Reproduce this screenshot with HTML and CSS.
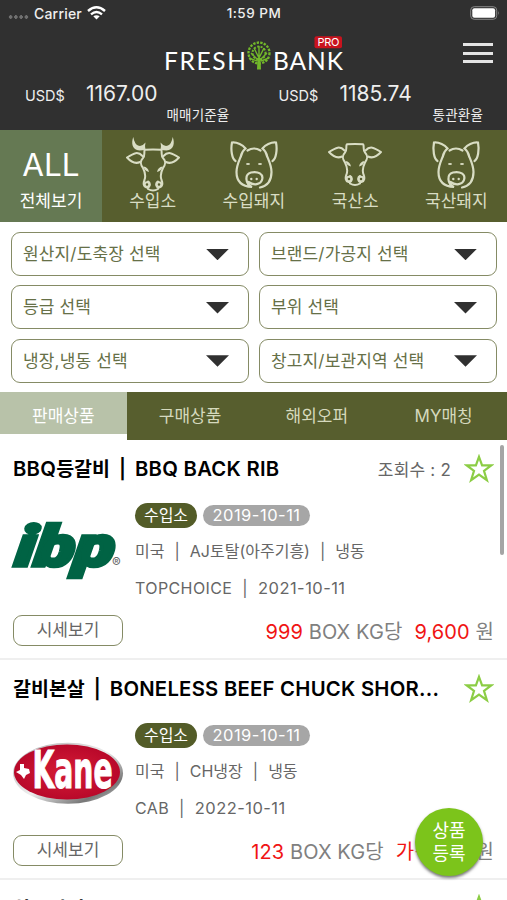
FILE: index.html
```html
<!DOCTYPE html>
<html lang="ko">
<head>
<meta charset="utf-8">
<title>FRESH BANK PRO</title>
<link rel="stylesheet" href="styles.css">
</head>
<body>
<svg class="defs" width="0" height="0" aria-hidden="true">
  <symbol id="head-cow" viewBox="0 0 54 56">
    <g fill="none" stroke="currentColor" stroke-width="2" stroke-linecap="round" stroke-linejoin="round">
      <path d="M19 13.8Q27 13 35 13.8M18.5 14.5C18 18 19 20 17 22C14 25 14.500 29 17 32C19 36 20 40 18.500 44C17 47 17.500 51 20.500 51.500C24 52 25 47 22 45.500M35.500 14.500C36 18 35 20 37 22C40 25 39.500 29 37 32C35 36 34 40 35.500 44C37 47 36.500 51 33.500 51.500C30 52 29 47 32 45.500M22 53Q27 56 32 53"/>
      <path d="M16.500 20C12 15 8 17 1 21.500C6 27 10 28 14 26M37.500 20C42 15 46 17 53 21.500C48 27 44 28 40 26"/>
      <circle cx="21" cy="48.500" r="2.300"/><circle cx="33" cy="48.500" r="2.300"/>
    </g>
    <path fill="currentColor" d="M17.500 30.500Q22 31 23 36Q18.500 35 17.500 30.500M36.500 30.500Q32 31 31 36Q35.500 35 36.500 30.500"/>
  </symbol>
  <symbol id="horned" viewBox="0 0 54 56">
    <path fill="currentColor" d="M7.300 1C5 7 6 14 13.500 14.500L19.500 14Q18.500 10 19.500 6.500Q16 11 12 9.500Q8.500 8 7.300 1M46.700 1C49 7 48 14 40.500 14.500L34.500 14Q35.500 10 34.500 6.500Q38 11 42 9.500Q45.500 8 46.700 1"/>
    <use href="#head-cow" width="54" height="56"/>
  </symbol>
  <symbol id="polled" viewBox="0 5.500 54 56"><use href="#head-cow" width="54" height="56"/></symbol>
  <symbol id="pig" viewBox="0 0 54 56">
    <g fill="none" stroke="currentColor" stroke-width="2.200" stroke-linecap="round">
      <path d="M8.500 25C5 23 3.500 14 5 6.500C10 6 16 9 18.500 12.500C16 14.500 14.500 17 14 20M45.500 25C49 23 50.500 14 49 6.500C44 6 38 9 35.500 12.500C38 14.500 39.500 17 40 20M20.500 14.500Q27 10.500 33.500 14.500"/>
      <path d="M14 20C12 25 9.500 30 9.500 36C9.500 46 15 50.500 25 51C18 48 17.500 38 24 36.500C31 35 37 38 35 44C33.500 48.500 27 50 21.500 46M40 20C42 25 44.500 30 44.500 36C44.500 46 40 50 33 51.500"/>
    </g>
    <g fill="currentColor"><ellipse cx="21" cy="28" rx="2" ry="1"/><ellipse cx="33" cy="28" rx="2" ry="1"/><circle cx="24.300" cy="43" r="1.200"/><circle cx="29.700" cy="43" r="1.200"/></g>
  </symbol>
  <symbol id="star" viewBox="0 0 30 30"><path d="M15 2.800L18.100 11.400H27.200L20 16.900L22.900 26.200L15 20.700L7.100 26.200L10 16.900L2.800 11.400H11.900Z" fill="none" stroke="#8ccd45" stroke-width="2.200"/></symbol>
</svg>

<main class="app">
  <header class="header">
    <div class="status">
      <div class="carrier"><i class="dots"></i><span>Carrier</span>
        <svg width="19" height="14" viewBox="0 0 19 14"><g fill="none" stroke="#fff" stroke-width="2.400"><path d="M1 5Q9.500-2.500 18 5"/><path d="M4 8.300Q9.500 3.700 15 8.300"/></g><path d="M6.300 10.300Q9.500 8 12.700 10.300L9.500 13.500Z" fill="#fff"/></svg>
      </div>
      <time>1:59 PM</time>
      <svg class="battery" width="30" height="14" viewBox="0 0 30 14"><rect x=".7" y=".7" width="26" height="12.600" rx="3.500" fill="none" stroke="#888" stroke-width="1"/><rect x="2.300" y="2.200" width="22.800" height="9.600" rx="2" fill="#fff"/><path d="M28 5v4q1.500-2 0-4" fill="#888"/></svg>
    </div>
    <div class="brand">
      <svg width="182" height="42" viewBox="0 0 182 42">
        <g class="logo-text"><text x="2" y="35.500" textLength="82">FRESH</text><text x="111" y="35.500" textLength="70">BANK</text></g>
        <g fill="none" stroke="#72b82a" stroke-width="1.400"><path d="M97 34V22M97 27L89 19M97 27L105 19M97 24L92 14M97 24L102 14M97 24V12M95 27L87 24M99 27L107 24" /><circle cx="97" cy="19" r="10.500" stroke-width="2.300" stroke-dasharray="2.400 1.200"/><circle cx="97" cy="19" r="6.500" stroke-width="2" stroke-dasharray="2 1.500"/></g><path d="M95.500 24H98.500L99 35.500H95Z" fill="#72b82a"/>
        <rect x="152.500" y="2.300" width="27.500" height="12" rx="2" fill="#c9131e"/><text class="pro" x="155.500" y="12.300" textLength="22">PRO</text>
      </svg>
      <div class="menu"><i></i><i></i><i></i></div>
    </div>
    <div class="rates">
      <div class="rate"><span>USD$</span><strong>1167.00</strong><small>매매기준율</small></div>
      <div class="rate"><span>USD$</span><strong>1185.74</strong><small>통관환율</small></div>
    </div>
  </header>

  <nav class="categories">
    <a class="category active"><b>ALL</b><span>전체보기</span></a>
    <a class="category"><svg><use href="#horned"/></svg><span>수입소</span></a>
    <a class="category"><svg><use href="#pig"/></svg><span>수입돼지</span></a>
    <a class="category"><svg><use href="#polled"/></svg><span>국산소</span></a>
    <a class="category"><svg><use href="#pig"/></svg><span>국산돼지</span></a>
  </nav>

  <section class="filters">
    <div class="select">원산지/도축장 선택</div><div class="select">브랜드/가공지 선택</div>
    <div class="select">등급 선택</div><div class="select">부위 선택</div>
    <div class="select">냉장,냉동 선택</div><div class="select">창고지/보관지역 선택</div>
  </section>

  <nav class="tabs"><a class="active">판매상품</a><a>구매상품</a><a>해외오퍼</a><a>MY매칭</a></nav>

  <section class="list">
    <article class="item">
      <div class="heading"><h2><span class="latin">BBQ</span>등갈비<i>|</i><span class="latin">BBQ BACK RIB</span></h2><span class="views">조회수 : 2</span><svg class="star"><use href="#star"/></svg></div>
      <div class="body">
        <svg class="maker" viewBox="0 0 111 64"><g transform="translate(1 43.500) skewX(-7) scale(1 1.180)"><text class="ibp" x="0" y="0" textLength="99" lengthAdjust="spacingAndGlyphs">ibp</text></g><text class="reg" x="99" y="45">®</text></svg>
        <div class="details">
          <div class="badges"><span class="type">수입소</span><span class="date">2019-10-11</span></div>
          <p>미국<i>|</i>AJ토탈(아주기흥)<i>|</i>냉동</p>
          <p class="grade">TOPCHOICE<i>|</i><span>2021-10-11</span></p>
        </div>
      </div>
      <div class="foot"><button>시세보기</button><p class="price"><em>999</em> BOX KG당<em class="amount">9,600</em> 원</p></div>
    </article>
    <article class="item">
      <div class="heading"><h2>갈비본살<i>|</i><span class="latin">BONELESS BEEF CHUCK SHOR...</span></h2><svg class="star"><use href="#star"/></svg></div>
      <div class="body">
        <svg class="maker" viewBox="0 0 111 64">
          <defs><linearGradient id="rim" x2="1" y2="1"><stop stop-color="#aaa"/><stop offset=".5" stop-color="#eee"/><stop offset=".8" stop-color="#777"/><stop offset="1" stop-color="#ddd"/></linearGradient><radialGradient id="red"><stop stop-color="#d51d36"/><stop offset="1" stop-color="#b9082a"/></radialGradient></defs>
          <ellipse cx="55" cy="31.300" rx="55" ry="30.500" fill="url(#rim)"/><ellipse cx="54" cy="30" rx="53" ry="27.500" fill="url(#red)"/>
          <path d="M8 23h4v4l5 1 1 4-4 2-2 4-3-4-5-3 4-2z" transform="translate(-1 -1)" fill="#fff"/>
          <g transform="translate(19.500 46.300) scale(1 1.080)"><text class="kane" x="0" y="0" textLength="80" lengthAdjust="spacingAndGlyphs">Kane</text></g>
        </svg>
        <div class="details">
          <div class="badges"><span class="type">수입소</span><span class="date">2019-10-11</span></div>
          <p>미국<i>|</i>CH냉장<i>|</i>냉동</p>
          <p class="grade">CAB<i>|</i><span>2022-10-11</span></p>
        </div>
      </div>
      <div class="foot"><button>시세보기</button><p class="price"><em>123</em> BOX KG당<em class="amount">가격문의</em> 원</p></div>
    </article>
    <article class="item">
      <div class="heading"><h2>차돌박이</h2><svg class="star"><use href="#star"/></svg></div>
    </article>
    <i class="scrollbar"></i>
  </section>
  <button class="fab">상품<br>등록</button>
</main>
</body>
</html>
```
FILE: styles.css
```css
* { box-sizing: border-box; }
body { margin: 0; font-family: Inter, "Noto Sans CJK KR", sans-serif; background: #fff; color: #666; }
i, em { font-style: normal; }
p, h2 { margin: 0; }
button { font-family: inherit; }
.defs { display: block; height: 0; }
.app { position: relative; width: 507px; height: 900px; overflow: hidden; display: flex; flex-direction: column; }

.header { height: 130px; flex: none; background: #303030; color: #eee; }
.status { height: 26px; display: grid; grid-template-columns: 1fr auto 1fr; align-items: center; padding: 0 7px 0 8px; font-size: 14px; font-weight: 500; letter-spacing: .2px; }
.carrier { display: flex; align-items: center; gap: 5px; }
.dots { width: 21px; height: 4px; margin-top: 8px; background: radial-gradient(circle, #707070 1.600px, transparent 2px) 0 0 / 5.250px 4px; }
.status time { font-size: 13.500px; letter-spacing: .5px; }
.battery { justify-self: end; }
.brand { height: 52px; display: flex; justify-content: space-between; padding: 8px 14px 0 162px; }
.logo-text { font: 400 24.500px Lato, sans-serif; fill: #fff; }
.pro { font: 400 11px Inter, sans-serif; fill: #fff; }
.menu { width: 30px; height: 20px; margin-top: 9px; display: flex; flex-direction: column; justify-content: space-between; }
.menu i { height: 3px; background: #e4e4e4; }
.rates { display: grid; grid-template-columns: 1fr 1fr; }
.rate { display: grid; grid-template-columns: 61px 1fr; align-items: baseline; padding: 3px 24px 0 25px; }
.rate span { font-size: 14.500px; }
.rate strong { font-size: 21px; line-height: 26px; font-weight: 400; letter-spacing: 0; }
.rate small { grid-column: 1 / 3; text-align: right; font-size: 13.500px; line-height: 16px; letter-spacing: .2px; }

.categories { height: 92px; flex: none; display: grid; grid-template-columns: 102px repeat(4, 1fr); background: #575e2e; color: #d9ddc4; }
.category { display: flex; flex-direction: column; align-items: center; padding-top: 6px; }
.category svg { width: 54px; height: 56px; flex: none; }
.category span { font-size: 17px; line-height: 20px; letter-spacing: 0; margin-top: -1px; }
.category b { height: 56px; padding-top: 7px; font-size: 31.500px; line-height: 44px; font-weight: 400; }
.category.active { background: #657953; color: #fff; }

.filters { height: 170px; flex: none; display: grid; grid-template-columns: 1fr 1fr; grid-auto-rows: 44px; gap: 9.300px 10px; padding: 10px 10px 0 11px; }
.select { border: 1.500px solid #858b65; border-radius: 9px; padding: 0 19px 3px 11px; display: flex; align-items: center; justify-content: space-between; font-size: 17px; letter-spacing: .15px; color: #667047; }
.select::after { content: ""; width: 23px; height: 11.500px; margin-top: 4px; background: #303030; clip-path: polygon(0 0, 100% 0, 50% 100%); }

.tabs { height: 48px; flex: none; display: grid; grid-template-columns: repeat(4, 1fr); background: linear-gradient(90deg, #fff 127px, #575e2e 127px); color: #d5d9bd; }
.tabs a { height: 48px; line-height: 49px; text-align: center; font-size: 17px; letter-spacing: 0; }
.tabs .active { height: 42px; background: #b8c2a9; color: #fff; }

.list { position: relative; flex: none; }
.item { height: 220px; border-bottom: 2px solid #efefef; padding: 13px 13px 0; }
.heading { height: 32px; display: flex; align-items: center; }
.heading h2 { flex: 1; padding-bottom: 3px; font-size: 19.500px; font-weight: 600; color: #000; letter-spacing: 0; white-space: nowrap; }
.latin { font-size: 20.300px; letter-spacing: .25px; }
.heading i { margin: 0 9px; }
.views { font-size: 17px; letter-spacing: .2px; padding-bottom: 2px; }
.star { width: 30px; height: 30px; margin: 0 0 0 13px; }
.body { display: flex; gap: 11px; height: 123px; padding-top: 17px; }
.maker { width: 111px; height: 64px; margin-top: 20px; overflow: visible; }
.ibp { font: italic 900 48px Roboto, sans-serif; fill: #006344; stroke: #006344; stroke-width: 3px; }
.reg { font: 13px Inter, sans-serif; fill: #666; }
.kane { font: 700 47px "DejaVu Sans Condensed", "Liberation Sans Narrow", sans-serif; fill: #fff; stroke: #fff; stroke-width: 1px; }
.badges { display: flex; align-items: center; gap: 6px; height: 26px; }
.type { width: 62px; height: 25px; line-height: 24px; text-align: center; border-radius: 13px; background: #535c28; color: #fff; font-size: 16px; letter-spacing: -.1px; }
.date { width: 107px; height: 21px; line-height: 21px; text-align: center; border-radius: 11px; background: #a6a6a6; color: #fff; font-size: 16.500px; letter-spacing: .5px; }
.details p { font-size: 16px; line-height: 24px; margin-top: 11px; letter-spacing: 0; white-space: nowrap; }
.details .grade { margin-top: 13px; letter-spacing: .4px; }
.grade span { font-size: 16.500px; letter-spacing: .45px; }
.details p i { margin: 0 10px; }
.foot { display: flex; justify-content: space-between; align-items: center; height: 44px; }
.foot button { width: 110px; height: 31px; padding: 0; border: 1.500px solid #858b65; border-radius: 9px; background: #fff; color: #666; font-size: 17px; line-height: 24px; letter-spacing: 0; }
.price { font-size: 20px; color: #808080; letter-spacing: .1px; white-space: nowrap; }
.price em { color: #f01414; }
.price .amount { margin-left: 12px; }
.scrollbar { position: absolute; right: 3px; top: 5px; width: 4px; height: 110px; border-radius: 2px; background: #a5a5a5; }
.fab { position: absolute; left: 415px; top: 808px; width: 68px; height: 68px; padding: 0; border: 0; border-radius: 50%; background: #7cc41b; color: #fff; font-size: 18px; line-height: 23px; box-shadow: 0 2px 3px #777; }
```
